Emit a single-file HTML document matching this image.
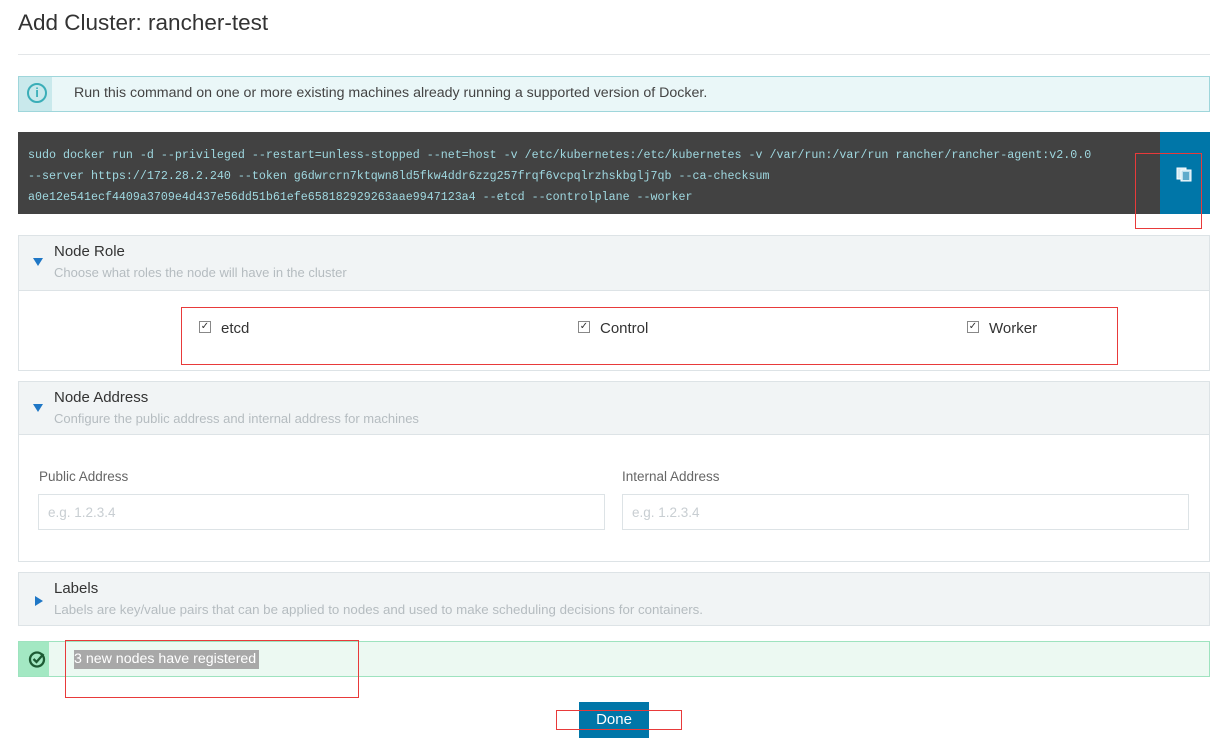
<!DOCTYPE html>
<html><head><meta charset="utf-8"><style>
*{box-sizing:border-box;margin:0;padding:0}
body{width:1228px;height:749px;background:#fff;font-family:"Liberation Sans",sans-serif;color:#333;position:relative;overflow:hidden}
.abs{position:absolute}
.red{position:absolute;border:1px solid #e83a3a}
.sec{position:absolute;left:18px;width:1192px;border:1px solid #dde3e6}
.hd{background:#f1f4f5;border-bottom:1px solid #dde3e6;position:relative}
.hd .t{position:absolute;left:35px;top:7px;font-size:15px;color:#333}
.hd .s{position:absolute;left:35px;top:29px;font-size:12.3px;color:#b5bcc0;white-space:nowrap}
.tri{position:absolute;left:14px;top:22px;width:0;height:0;border-left:5px solid transparent;border-right:5px solid transparent;border-top:8px solid #1f77c6}
.cb{position:absolute;width:12px;height:12px;border:1px solid #888;background:#fff;font-size:10px;line-height:10px;text-align:center;color:#333}
.lbl{position:absolute;font-size:15px;color:#333}
.inp{position:absolute;height:36px;border:1px solid #dde3e6;font-size:13.5px;color:#c8ced2;padding:10px 9px}
</style></head><body>
<div class="abs" style="left:18px;top:10px;font-size:22.5px;color:#333">Add Cluster: rancher-test</div>
<div class="abs" style="left:18px;top:54px;width:1192px;height:1px;background:#e3e6e8"></div>

<div class="abs" style="left:18px;top:76px;width:1192px;height:36px;border:1px solid #9fd6db;background:#eaf7f8">
 <div class="abs" style="left:0;top:0;width:33px;height:34px;background:#c9e9ec"></div>
 <div class="abs" style="left:8px;top:6px;width:20px;height:20px;border:2px solid #3aaeb8;border-radius:50%;color:#3aaeb8;font-size:13px;font-weight:bold;text-align:center;line-height:16px">i</div>
 <div class="abs" style="left:55px;top:8px;font-size:14.2px;color:#444;white-space:nowrap">Run this command on one or more existing machines already running a supported version of Docker.</div>
</div>

<div class="abs" style="left:18px;top:132px;width:1192px;height:82px;background:#424242">
 <div class="abs" style="left:10px;top:13px;font-family:'Liberation Mono',monospace;font-size:11.67px;line-height:21px;color:#9fd8e0;white-space:pre">sudo docker run -d --privileged --restart=unless-stopped --net=host -v /etc/kubernetes:/etc/kubernetes -v /var/run:/var/run rancher/rancher-agent:v2.0.0
--server https://172.28.2.240 --token g6dwrcrn7ktqwn8ld5fkw4ddr6zzg257frqf6vcpqlrzhskbglj7qb --ca-checksum
a0e12e541ecf4409a3709e4d437e56dd51b61efe658182929263aae9947123a4 --etcd --controlplane --worker</div>
 <div class="abs" style="left:1142px;top:0;width:50px;height:82px;background:#0076a8">
  <svg class="abs" style="left:16px;top:34px" width="16" height="16" viewBox="0 0 16 16"><rect x="1" y="2" width="9" height="11" fill="#cfe8f2" stroke="#fff"/><rect x="5" y="4" width="10" height="11" fill="#bfe0ee" stroke="#fff"/><path d="M7 7h6M7 9h6M7 11h6M7 13h6" stroke="#0076a8"/></svg>
 </div>
</div>
<div class="red" style="left:1135px;top:153px;width:67px;height:76px"></div>

<div class="sec" style="top:235px;height:136px">
 <div class="hd" style="height:55px"><div class="tri"></div><div class="t">Node Role</div><div class="s" style="font-size:13px">Choose what roles the node will have in the cluster</div></div>
</div>
<div class="cb" style="left:199px;top:321px">✓</div><div class="lbl" style="left:221px;top:320px">etcd</div>
<div class="cb" style="left:578px;top:321px">✓</div><div class="lbl" style="left:600px;top:320px">Control</div>
<div class="cb" style="left:967px;top:321px">✓</div><div class="lbl" style="left:989px;top:320px">Worker</div>
<div class="red" style="left:181px;top:307px;width:937px;height:58px"></div>

<div class="sec" style="top:381px;height:181px">
 <div class="hd" style="height:53px"><div class="tri"></div><div class="t">Node Address</div><div class="s" style="font-size:13px">Configure the public address and internal address for machines</div></div>
</div>
<div class="abs" style="left:39px;top:469px;font-size:13.5px;color:#666">Public Address</div>
<div class="abs" style="left:622px;top:469px;font-size:13.5px;color:#666">Internal Address</div>
<div class="inp" style="left:38px;top:494px;width:567px">e.g. 1.2.3.4</div>
<div class="inp" style="left:622px;top:494px;width:567px">e.g. 1.2.3.4</div>

<div class="sec" style="top:572px;height:54px">
 <div class="hd" style="height:52px;border-bottom:none"><div class="tri" style="border:none;border-top:5px solid transparent;border-bottom:5px solid transparent;border-left:8px solid #1f77c6;left:16px;top:23px"></div><div class="t">Labels</div><div class="s" style="font-size:13.3px">Labels are key/value pairs that can be applied to nodes and used to make scheduling decisions for containers.</div></div>
</div>

<div class="abs" style="left:18px;top:641px;width:1192px;height:36px;border:1px solid #9ee3bf;background:#ecf9f2">
 <div class="abs" style="left:0;top:0;width:30px;height:34px;background:#a3e8c3"></div>
 <svg class="abs" style="left:9px;top:8px" width="18" height="18" viewBox="0 0 18 18"><circle cx="9" cy="9.5" r="7" fill="none" stroke="#1d5a34" stroke-width="2.3"/><path d="M5.5 9l3 3 7-8" fill="none" stroke="#1d5a34" stroke-width="2.3"/></svg>
 <div class="abs" style="left:55px;top:8px;height:19px;background:#a8a8a8;color:#fff;font-size:14.2px;line-height:19px;padding:0 3px 0 0;white-space:nowrap">3 new nodes have registered</div>
</div>
<div class="red" style="left:65px;top:640px;width:294px;height:58px"></div>

<div class="abs" style="left:579px;top:702px;width:70px;height:36px;background:#0076a8;color:#fff;font-size:15px;text-align:center;line-height:36px">Done</div>
<div class="red" style="left:556px;top:710px;width:126px;height:20px"></div>
</body></html>
